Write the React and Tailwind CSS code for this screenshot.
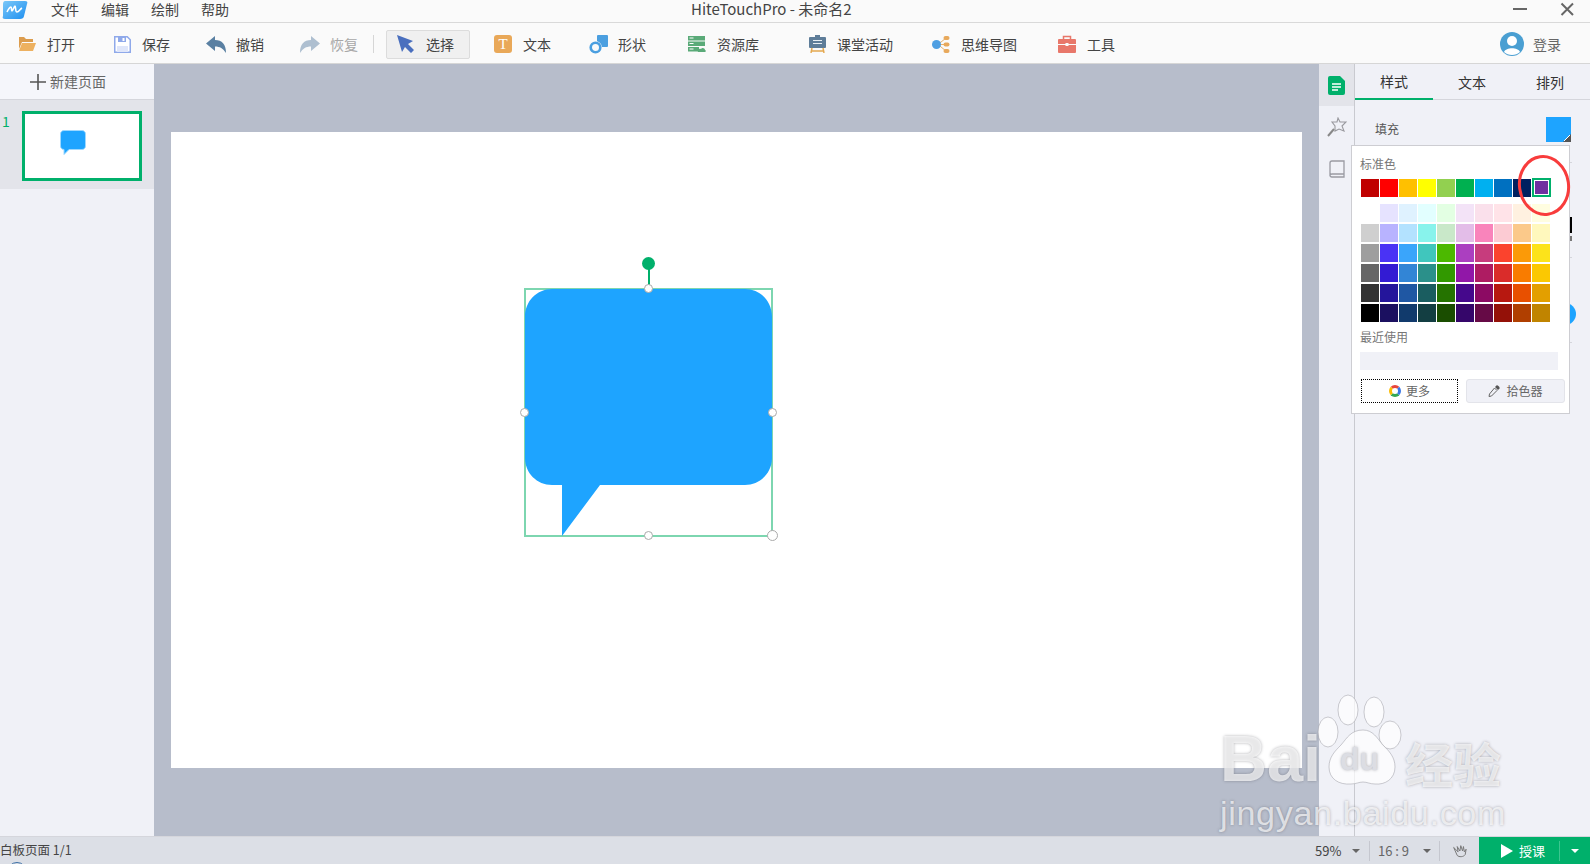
const font = "font-['Noto_Sans_CJK_SC','Liberation_Sans',sans-serif]";

const standard = ["#c00000", "#ff0000", "#ffc000", "#ffff00", "#92d050", "#00b050", "#00b0f0", "#0070c0", "#002060"];

const shades = [
  ["#ffffff", "#e6e3ff", "#dff2ff", "#e2ffff", "#e3ffe3", "#f3e3f7", "#fae0eb", "#ffe3e8", "#fff1e0", "#fffde0"],
  ["#cfcfcf", "#b8b3ff", "#b3e2ff", "#88f3ec", "#c9e8c9", "#e3bde8", "#f984bb", "#fccbd3", "#fbc98a", "#fff8bd"],
  ["#9e9e9e", "#4a33f5", "#3aa5fb", "#40c6bd", "#4cb900", "#ab3fc0", "#c73c7d", "#fb432d", "#fb9a08", "#fce31b"],
  ["#666666", "#331bd3", "#3285d6", "#2b908a", "#329900", "#9117a8", "#ae1c62", "#da2c2a", "#f97c00", "#fbc802"],
  ["#333333", "#24159b", "#1f57a3", "#1a5d60", "#257300", "#45088c", "#8c0a63", "#b71810", "#e85000", "#e39f00"],
  ["#000000", "#1b1060", "#113a6c", "#133e42", "#1a4d00", "#35066a", "#660a46", "#941108", "#b03f00", "#c08400"],
];

const OpenIcon = () => (
  <svg width="18" height="16" viewBox="0 0 18 16">
    <path d="M1 1h5l2 2h7v3H4L1 13z" fill="#dc9d4e" />
    <path d="M4 7h14l-3 8H1z" fill="#edb160" />
  </svg>
);

const SaveIcon = () => (
  <svg width="17" height="17" viewBox="0 0 17 17">
    <path d="M.75.75h12.5l3 3v12.5H.75z" fill="#fff" stroke="#8fa9ea" strokeWidth="1.5" />
    <rect x="4" y="1" width="8" height="5" fill="#8fa9ea" />
    <rect x="8.5" y="2" width="2" height="3" fill="#fff" />
    <rect x="3" y="10" width="11" height="6" fill="#dfe6fa" />
  </svg>
);

const UndoIcon = ({ fill, flip }) => (
  <svg width="20" height="17" viewBox="0 0 20 17" className={flip ? "-scale-x-100" : ""}>
    <path d="M9 0L0 7.500 9 15v-4.500c5 0 8 2 11 6.500 0-9-4-13-11-13z" fill={fill} />
  </svg>
);

const SelectIcon = () => (
  <svg width="17" height="18" viewBox="0 0 17 18">
    <path d="M0 0l16 6-5 3 6 6-3 3-6-6-3 5z" fill="#4a6fbe" />
  </svg>
);

const TextIcon = () => (
  <div className="w-[18px] h-[18px] rounded-[3px] bg-[#e9a858] text-white text-[15px] leading-[18px] text-center font-['Liberation_Serif',serif]">T</div>
);

const ShapeIcon = () => (
  <svg width="19" height="19" viewBox="0 0 19 19">
    <rect x="8" y="0" width="11" height="12" rx="1" fill="#4b9fe0" />
    <circle cx="6.5" cy="12.5" r="6.5" fill="#fafafa" />
    <circle cx="6.5" cy="12.5" r="4.8" fill="none" stroke="#4b9fe0" strokeWidth="2.6" />
  </svg>
);

const ResourceIcon = () => (
  <svg width="18" height="16" viewBox="0 0 18 16">
    <rect width="17" height="4.5" fill="#5aaa78" />
    <rect y="5.5" width="17" height="4.5" fill="#5aaa78" />
    <rect y="11" width="11" height="4.5" fill="#5aaa78" />
    <path d="M10 16c-1-2 1-4 3-3 1-2 4-1 4 1 1 0 1 2 0 2z" fill="#5aaa78" />
    <rect x="1.5" y="1.5" width="4" height="1" fill="#fff" />
    <rect x="1.5" y="7" width="4" height="1" fill="#fff" />
    <rect x="1.5" y="12.5" width="4" height="1" fill="#fff" />
  </svg>
);

const ClassIcon = () => (
  <svg width="17" height="18" viewBox="0 0 17 18">
    <rect x="0" y="2" width="17" height="11" rx="1" fill="#5e7d99" />
    <rect x="6" y="0" width="5" height="2" fill="#5e7d99" />
    <rect x="4" y="5" width="9" height="1" fill="#e8eef3" />
    <rect x="4" y="8" width="9" height="1" fill="#e8eef3" />
    <path d="M3 13l-1 5M14 13l1 5M2 16h13" stroke="#e4a84f" strokeWidth="1.5" fill="none" />
  </svg>
);

const MindIcon = () => (
  <svg width="18" height="17" viewBox="0 0 18 17">
    <path d="M6 8.5L14 2M6 8.5h8M6 8.5L14 15" stroke="#e8b26b" strokeWidth="1" fill="none" />
    <circle cx="4.5" cy="8.5" r="4.5" fill="#4f9fe2" />
    <rect x="11.5" y="0" width="6" height="4" rx="2" fill="#e8a95c" />
    <rect x="11.5" y="6.5" width="6" height="4" rx="2" fill="#e8a95c" />
    <rect x="11.5" y="13" width="6" height="4" rx="2" fill="#e8a95c" />
  </svg>
);

const ToolIcon = () => (
  <svg width="18" height="18" viewBox="0 0 18 18">
    <path d="M5.5 5V1.5h7V5" fill="none" stroke="#e8776a" strokeWidth="1.5" />
    <rect y="4" width="18" height="14" rx="1" fill="#e8776a" />
    <rect y="9" width="18" height="1" fill="#fafafa" />
    <rect x="7.5" y="8" width="3" height="3" fill="#fafafa" />
  </svg>
);

const tools = [
  { label: "打开", icon: <OpenIcon />, w: "w-[112px] pl-[17px]" },
  { label: "保存", icon: <SaveIcon />, w: "w-[94px]" },
  { label: "撤销", icon: <UndoIcon fill="#5a80a2" />, w: "w-[94px]" },
  { label: "恢复", icon: <UndoIcon fill="#aebfd0" flip />, muted: true, w: "w-[73px]" },
];

const tools2 = [
  { label: "文本", icon: <TextIcon />, w: "w-[95px]" },
  { label: "形状", icon: <ShapeIcon />, w: "w-[99px]" },
  { label: "资源库", icon: <ResourceIcon />, w: "w-[120px]" },
  { label: "课堂活动", icon: <ClassIcon />, w: "w-[124px]" },
  { label: "思维导图", icon: <MindIcon />, w: "w-[126px]" },
  { label: "工具", icon: <ToolIcon />, w: "w-[80px]" },
];

const ToolButton = ({ item }) => (
  <div className={`${item.w} flex items-center gap-[10px] shrink-0`}>
    <div className="w-[20px] flex justify-center">{item.icon}</div>
    <span className={`text-[14px] ${item.muted ? "text-[#a8a8a8]" : "text-[#444]"}`}>{item.label}</span>
  </div>
);

const Handle = ({ className, big }) => (
  <div className={`absolute ${big ? "w-[11px] h-[11px]" : "w-[9px] h-[9px]"} rounded-full bg-white border border-[#aaa] ${className}`} />
);

const ColorPopup = () => (
  <div className="absolute left-[1351px] top-[145px] w-[219px] h-[269px] bg-white border border-[#cdcdd2] pl-[8px]">
    <div className="text-[12px] leading-[16px] text-[#777] mt-[10px]">标准色</div>
    <div className="flex gap-px mt-[7px] ml-px h-[19px]">
      {standard.map((c) => (
        <div key={c} className="w-[18px] h-[18px]" style={{ backgroundColor: c }} />
      ))}
      <div className="w-[19px] h-[19px] border-2 border-[#00b06b] p-[1px] -mt-px">
        <div className="w-full h-full bg-[#7030a0]" />
      </div>
    </div>
    <div className="flex flex-col gap-[2px] mt-[6px] ml-px">
      {shades.map((row, i) => (
        <div key={i} className="flex gap-px">
          {row.map((c, j) => (
            <div key={j} className="w-[18px] h-[18px]" style={{ backgroundColor: c }} />
          ))}
        </div>
      ))}
    </div>
    <div className="text-[12px] leading-[16px] text-[#777] mt-[7px]">最近使用</div>
    <div className="w-[198px] h-[18px] bg-[#f0f1f7] mt-[7px]" />
    <div className="flex gap-[8px] mt-[9px] ml-px">
      <div className="w-[97px] h-[24px] border border-dotted border-black flex items-center justify-center gap-[5px] text-[12px] text-[#666]">
        <div className="w-[12px] h-[12px] rounded-full border-[3px] border-t-[#e8453c] border-r-[#3b78e7] border-b-[#34a853] border-l-[#fbbc05]" />
        更多
      </div>
      <div className="w-[99px] h-[24px] rounded-[3px] bg-[#f0f1f7] border border-[#e3e4ea] flex items-center justify-center gap-[6px] text-[12px] text-[#666]">
        <svg width="12" height="12" viewBox="0 0 12 12">
          <path d="M6.5 3l2.500 2.500L3.500 11 1 11.500 1.500 9z" fill="none" stroke="#666" strokeWidth="1" />
          <path d="M7 2l1.500-1.500c1-.8 3.800 2 3 3L10 5z" fill="#555" />
        </svg>
        拾色器
      </div>
    </div>
  </div>
);

export default function App() {
  return (
    <div className={`relative w-[1590px] h-[864px] overflow-hidden flex flex-col bg-[#f0f1f7] ${font}`}>
      {/* title bar */}
      <div className="h-[23px] shrink-0 bg-[#fafafa] border-b border-[#d9d9d9] relative flex items-center">
        <svg width="26" height="19" viewBox="0 0 26 19" className="ml-[2px] -mt-[4px]">
          <defs>
            <linearGradient id="logo" x1="0" y1="0" x2="1" y2="1">
              <stop offset="0" stopColor="#7cc8f8" />
              <stop offset="1" stopColor="#1d8ff0" />
            </linearGradient>
          </defs>
          <path d="M3 1h20c2 0 3 1 2 3l-3 12c0 2-2 3-4 3H3c-2 0-3-1-2-3V4c0-2 1-3 2-3z" fill="url(#logo)" />
          <path d="M5 12c2-4 3-5 4-5s0 4 1 4 2-5 3-5 0 6 2 6 3-3 5-4" stroke="#fff" strokeWidth="1.6" fill="none" />
        </svg>
        <div className="flex gap-[22px] ml-[23px] -mt-[4px] text-[14px] leading-[18px] text-[#444]">
          <span>文件</span>
          <span>编辑</span>
          <span>绘制</span>
          <span>帮助</span>
        </div>
        <div className="absolute left-[691px] top-0 text-[15px] leading-[18px] text-[#444]">HiteTouchPro - 未命名2</div>
        <svg width="64" height="16" viewBox="0 0 64 16" className="absolute left-[1513px] top-[1px]">
          <rect x="0" y="7" width="14" height="2" fill="#666" />
          <path d="M48.500 2.500l11.500 11.500M60 2.500L48.500 14" stroke="#666" strokeWidth="2" />
        </svg>
      </div>

      {/* toolbar */}
      <div className="h-[41px] shrink-0 bg-[#fafafa] border-b border-[#d6d6d6] flex items-center pt-[2px]">
        {tools.map((t) => (
          <ToolButton key={t.label} item={t} />
        ))}
        <div className="w-px h-[18px] bg-[#d6d6d6]" />
        <div className="w-[84px] h-[29px] ml-[12px] mr-[23px] rounded-[2px] bg-[#f0f0f0] border border-[#dcdcdc] flex items-center gap-[12px] pl-[10px] text-[14px] text-[#444]">
          <SelectIcon />
          <span>选择</span>
        </div>
        {tools2.map((t) => (
          <ToolButton key={t.label} item={t} />
        ))}
        <div className="ml-auto mr-[29px] flex items-center gap-[9px]">
          <svg width="24" height="24" viewBox="0 0 24 24">
            <circle cx="12" cy="12" r="12" fill="#4a9fd2" />
            <circle cx="12" cy="9" r="5" fill="#fff" />
            <path d="M4 20c2-5 14-5 16 0-4 4-12 4-16 0z" fill="#fff" />
          </svg>
          <span className="text-[14px] text-[#666]">登录</span>
        </div>
      </div>

      {/* main */}
      <div className="flex-1 flex min-h-0">
        <div className="w-[154px] shrink-0 bg-[#f0f1f7]">
          <div className="h-[36px] bg-[#f5f6fb] border-b border-[#d5d6dc] flex items-center pl-[30px] text-[14px] text-[#666]">
            <svg width="16" height="16" viewBox="0 0 16 16" className="mr-[4px]">
              <path d="M8 0v16M0 8h16" stroke="#555" strokeWidth="1.6" />
            </svg>
            新建页面
          </div>
          <div className="h-[89px] bg-[#e3e4ea] relative">
            <span className="absolute left-[2px] top-[12px] text-[14px] leading-[18px] text-[#00b06b]">1</span>
            <div className="absolute left-[22px] top-[11px] w-[120px] h-[70px] bg-white border-[3px] border-[#00b06b] flex items-center justify-center">
              <svg width="26" height="25" viewBox="0 0 26 25" className="-mt-[8px] mr-[18px]">
                <path d="M4 .5h18c2 0 3.500 1.500 3.500 3.500v12c0 2-1.500 3.500-3.500 3.500H9L4 24.500v-5c-2 0-3.500-1.500-3.500-3.500V4C.5 2 2 .5 4 .5z" fill="#1ea4ff" stroke="#9ed8ff" />
              </svg>
            </div>
          </div>
        </div>

        {/* canvas */}
        <div className="flex-1 bg-[#b7bdcb] pl-[17px] pt-[68px] pr-[17px] pb-[68px] relative">
          <div className="w-full h-full bg-white" />
        </div>

        {/* side rail */}
        <div className="w-[36px] shrink-0 bg-[#f0f1f7] border-r border-[#c9cad0] flex flex-col">
          <div className="h-[42px] bg-[#e3e4ea] flex items-center justify-center">
            <svg width="17" height="19" viewBox="0 0 17 19">
              <path d="M2 0h10l5 5v12a2 2 0 01-2 2H2a2 2 0 01-2-2V2a2 2 0 012-2z" fill="#00b06b" />
              <path d="M4 8h9M4 11h9M4 14h6" stroke="#fff" strokeWidth="1.3" />
            </svg>
          </div>
          <div className="h-[42px] flex items-center justify-center">
            <svg width="20" height="20" viewBox="0 0 20 20">
              <path d="M11 1l2 4 6 0-4 4 2 5-5-2-4 2 0-5-3-4 5 0z" fill="none" stroke="#9a9a9f" strokeWidth="1.1" />
              <path d="M7 12l-6 7" stroke="#888" strokeWidth="2" />
            </svg>
          </div>
          <div className="h-[42px] flex items-center justify-center">
            <svg width="16" height="18" viewBox="0 0 16 18">
              <path d="M3 1h12v13H3a2 2 0 00-2 2V3a2 2 0 012-2zM1 15a2 2 0 002 2h12v-3" fill="none" stroke="#9a9ba3" strokeWidth="1.3" />
            </svg>
          </div>
        </div>

        {/* right panel */}
        <div className="w-[235px] shrink-0 bg-[#f0f1f7]">
          <div className="h-[36px] border-b border-[#d5d6dc] flex text-[14px] text-[#333] pr-[1px]">
            <div className="w-[78px] h-[36px] border-b-2 border-[#00b06b] text-center leading-[34px]">样式</div>
            <div className="w-[78px] text-center leading-[36px]">文本</div>
            <div className="w-[78px] text-center leading-[36px]">排列</div>
          </div>
          <div className="flex items-center justify-between pl-[20px] pr-[19px] pt-[17px]">
            <span className="text-[12px] text-[#555] -mt-[2px]">填充</span>
            <div className="w-[25px] h-[25px] bg-[#1ea4ff] relative">
              <svg width="8" height="8" viewBox="0 0 8 8" className="absolute right-0 bottom-0">
                <path d="M8 0v8H0z" fill="#555" />
                <path d="M7 1L1 7" stroke="#fff" strokeWidth="1" />
              </svg>
            </div>
          </div>
          {/* bits of the panel showing past the colour popup */}
          <div className="relative">
            <div className="absolute left-[215px] top-[20px] w-[2px] h-px bg-[#d5d6dc]" />
            <div className="absolute left-[215px] top-[75px] w-[2px] h-[16px] bg-black" />
            <div className="absolute left-[215px] top-[94px] w-[2px] h-[5px] bg-[#777]" />
            <div className="absolute left-[215px] top-[115px] w-[2px] h-px bg-[#d5d6dc]" />
            <div className="absolute left-[199px] top-[161px] w-[22px] h-[22px] rounded-full bg-[#1ea4ff]" />
            <div className="absolute left-[215px] top-[200px] w-[2px] h-px bg-[#d5d6dc]" />
          </div>
        </div>
      </div>

      {/* status bar */}
      <div className="h-[28px] shrink-0 bg-[#dcdfe6] border-t border-[#d5d6dc] flex items-center text-[13px] text-[#444] relative overflow-hidden">
        <span className="text-[12.5px]">白板页面 1/1</span>
        <div className="absolute left-[7px] top-[25px] w-[20px] h-[20px] rounded-full border border-[#3a6ea5]" />
        <div className="ml-auto w-[275px] flex items-center h-full">
          <span className="w-[25px] whitespace-nowrap">59%</span>
          <div className="ml-[12px] mr-[9px] w-0 h-0 border-x-[4px] border-x-transparent border-t-[4px] border-t-[#666]" />
          <div className="w-px h-[20px] bg-[#c5c7cf]" />
          <span className="ml-[8px] w-[32px] whitespace-nowrap text-[#666]">16 : 9</span>
          <div className="ml-[13px] mr-[8px] w-0 h-0 border-x-[4px] border-x-transparent border-t-[4px] border-t-[#666]" />
          <div className="w-px h-[20px] bg-[#c5c7cf]" />
          <svg width="16" height="16" viewBox="0 0 18 16" className="ml-[11px] mr-[12px]">
            <path d="M3 4l4 9c2 2 7 2 9-1l1-6-2 3-1-6-1 5-2-6-1 6-3-5 1 6z" fill="none" stroke="#777" strokeWidth="1.1" />
          </svg>
          <div className="w-[111px] h-full bg-[#00b06b] text-white flex items-center">
            <svg width="12" height="14" viewBox="0 0 12 14" className="ml-[22px] mr-[6px]">
              <path d="M0 0l12 7-12 7z" fill="#fff" />
            </svg>
            <span className="text-[13px]">授课</span>
            <div className="ml-[14px] w-px h-[20px] bg-[#3cc58f]" />
            <div className="ml-[11px] w-0 h-0 border-x-[4px] border-x-transparent border-t-[4px] border-t-white" />
          </div>
        </div>
      </div>

      {/* selected shape, sits on the slide */}
      <div className="absolute left-[524px] top-[288px] w-[249px] h-[249px] border-2 border-[#7dd6b0]">
        <svg width="247" height="247" viewBox="0 0 247 247" className="absolute -left-px -top-px">
          <path d="M27 0h193c15 0 27 12 27 28v141c0 15-12 27-27 27H75l-38 51V196H27c-15 0-27-12-27-27V28C0 12 12 0 27 0z" fill="#1ea4ff" />
        </svg>
        <div className="absolute left-[122px] -top-[22px] w-[1.5px] h-[22px] bg-[#00b06b]" />
        <div className="absolute left-[116px] -top-[33px] w-[13px] h-[13px] rounded-full bg-[#00b06b]" />
        <Handle className="left-[118px] -top-[6px]" />
        <Handle className="-left-[6px] top-[118px]" />
        <Handle className="left-[242px] top-[118px]" />
        <Handle className="left-[118px] top-[241px]" />
        <Handle big className="left-[241px] top-[240px]" />
      </div>

      <ColorPopup />

      {/* red hand drawn circle */}
      <svg width="56" height="66" viewBox="0 0 56 66" className="absolute left-[1516px] top-[153px]">
        <ellipse cx="28" cy="32.500" rx="24.500" ry="29" fill="none" stroke="#f83c3c" strokeWidth="3" transform="rotate(-8 28 32.500)" />
      </svg>

      {/* baidu watermark */}
      <div className="absolute left-[1220px] top-[680px] font-['Liberation_Sans',sans-serif] text-white/70 [text-shadow:0_0_3px_rgba(60,60,70,0.4)]">
        <svg width="100" height="112" viewBox="0 0 100 112" className="absolute left-[90px] top-0">
          <g fill="#fff" fillOpacity="0.7" stroke="#9a9aa2" strokeOpacity="0.5">
            <ellipse cx="18" cy="52" rx="10" ry="15" />
            <ellipse cx="38" cy="30" rx="10" ry="15" />
            <ellipse cx="64" cy="32" rx="10" ry="15" />
            <ellipse cx="80" cy="55" rx="11" ry="14" />
            <path d="M53 50c10 0 14 8 20 15 6 6 12 12 12 22 0 12-10 18-20 17-5 0-8-2-12-2s-7 2-12 2c-12 1-22-5-22-17 0-10 6-16 12-22 6-7 10-15 22-15z" />
          </g>
        </svg>
        <span className="absolute left-0 top-[44px] font-bold text-[65px] leading-[70px]">Bai</span>
        <span className="absolute left-[120px] top-[60px] font-bold text-[32px] leading-[38px] text-[#dcdde3]">du</span>
        <span className="absolute left-[185px] top-[52px] font-bold text-[48px] leading-[60px] whitespace-nowrap font-['Noto_Sans_CJK_SC',sans-serif]">经验</span>
        <span className="absolute left-0 top-[113px] text-[34px] leading-[40px] whitespace-nowrap tracking-[0.7px]">jingyan.baidu.com</span>
      </div>
    </div>
  );
}
